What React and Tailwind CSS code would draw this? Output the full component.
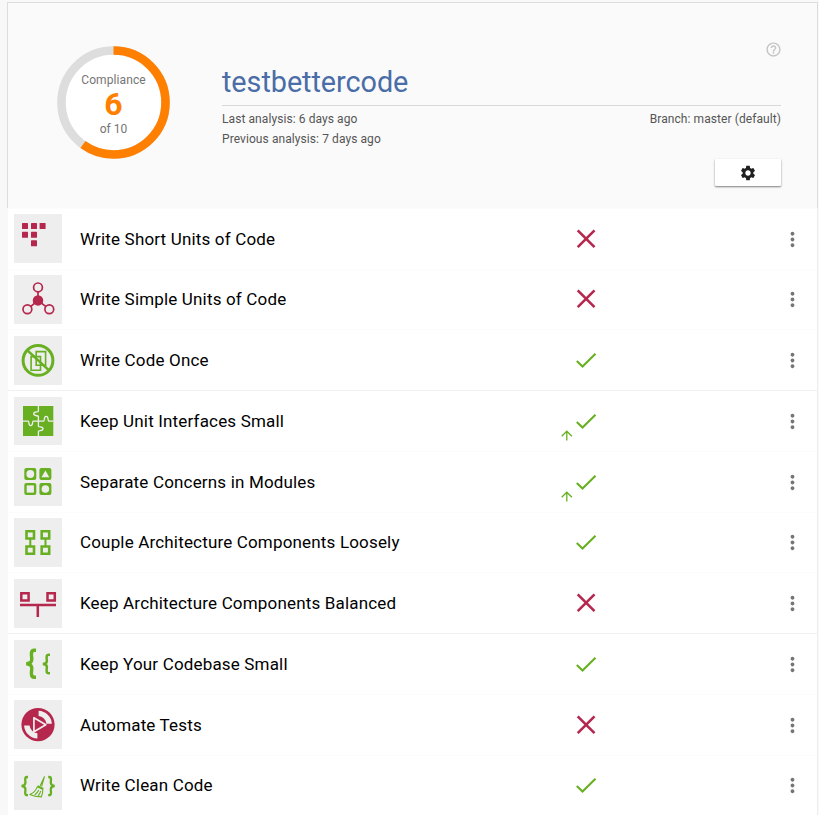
import React from "react";
import { MdSettings, MdHelpOutline, MdMoreVert } from "react-icons/md";

const RED = "#b5274d";
const GREEN = "#68b022";
const TILE = "#eeeeee";

function ShortUnits() {
  return (
    <g fill={RED}>
      {[[8, 9], [17, 9], [25.6, 9], [8, 17.8], [17, 17.8], [17, 26.3]].map(([x, y]) => (
        <rect key={`${x}-${y}`} x={x} y={y} width="6" height="6" rx="0.6" />
      ))}
    </g>
  );
}

function SimpleUnits() {
  return (
    <g fill="none" stroke={RED} strokeWidth="1.7">
      <path d="M24 16.5v9M24 25.5l-7.5 6.2M24 25.5l8 6.2" />
      <circle cx="24" cy="12.4" r="4.4" />
      <circle cx="13.4" cy="34.3" r="4.4" />
      <circle cx="35.3" cy="34.3" r="4.4" />
      <circle cx="24" cy="25.4" r="4.4" fill={RED} />
    </g>
  );
}

function CodeOnce() {
  return (
    <g fill="none" stroke={GREEN}>
      <path strokeWidth="1.6" d="M22.2 15.6h9.4v13.6h-9.4zM17.1 20.6h9.4v13.6h-9.4z" />
      <circle cx="24" cy="24.4" r="14.9" strokeWidth="3" />
      <path strokeWidth="2.6" d="M13.4 14.4L35 34.4" />
    </g>
  );
}

function SmallInterfaces() {
  return (
    <g>
      <path fill={GREEN} d="M9 9h30.3v30H9z" />
      <path
        fill="none"
        stroke={TILE}
        strokeWidth="1.3"
        d="M24.4 9v5.2c-.6 1.2-4.7-.1-4.7 2.6s4.1 1.4 4.7 2.6v4.4M24.4 23.8v5.4c.6 1.2 4.6.1 4.6 2.6s-4 1.4-4.6 2.6V39M9 24.2h5.2c1.3.5-.1 4.5 2.5 4.5s1.3-4 2.5-4.5h10.4c1.3-.5-.1-4.8 2.6-4.8s1.3 4.3 2.6 4.8h4.5"
      />
    </g>
  );
}

function SeparateConcerns() {
  return (
    <g>
      <g fill={GREEN}>
        <rect x="10.3" y="11" width="12" height="12" rx="2" />
        <rect x="25.4" y="11" width="12" height="12" rx="2" />
        <rect x="10.3" y="26" width="12" height="12" rx="2" />
        <rect x="25.4" y="26" width="12" height="12" rx="2" />
      </g>
      <g fill={TILE}>
        <circle cx="16.3" cy="17" r="3.9" />
        <path d="M31.4 13.4l3.9 6.8h-7.8z" />
        <rect x="12.7" y="28.4" width="7.2" height="7.2" />
        <circle cx="31.4" cy="32" r="3.8" />
      </g>
    </g>
  );
}

function CoupleLoosely() {
  return (
    <g fill="none" stroke={GREEN} strokeWidth="2.6">
      <path d="M12.5 13.3h7.5v7.2h-7.5zM12.5 28.5h7.5v7.2h-7.5zM27.7 13.3h7.5v7.2h-7.5zM27.7 28.5h7.5v7.2h-7.5z" />
      <path strokeWidth="2" d="M16.3 21v7M31.5 21v7" />
    </g>
  );
}

function Balanced() {
  return (
    <g fill="none" stroke={RED} strokeWidth="2.5">
      <path d="M7.3 14.2h7.3v7.3H7.3zM33.5 14.2h7.3v7.3h-7.3z" />
      <path d="M6 26.1h36M23.8 26v12" />
    </g>
  );
}

function SmallCodebase() {
  return (
    <g fill="none" stroke={GREEN}>
      <path strokeWidth="3.4" d="M22 10.3h-1.6c-2.4 0-3 1.4-3 3.4 0 2.7.5 4.2.3 6.3-.2 2.3-2.1 3.6-5.5 3.7 3.4.2 5.3 1.5 5.5 3.8.2 2.1-.3 3.7-.3 6.3 0 2 .7 3.5 3 3.5H22" />
      <path strokeWidth="2.5" d="M36 14.8h-1.2c-1.7 0-2.2 1-2.2 2.4 0 1.8.4 2.9.2 4.3-.2 1.6-1.6 2.4-4 2.5 2.4.1 3.8.9 4 2.5.2 1.4-.2 2.5-.2 4.3 0 1.5.5 2.5 2.2 2.5H36" />
    </g>
  );
}

function AutomateTests() {
  return (
    <g>
      <circle cx="24" cy="24.6" r="16.6" fill={RED} />
      <path fill={TILE} d="M24.6 10.7a14 14 0 0 1 13.3 13.1h-5.5a8.5 8.5 0 0 0-7.8-7.7zM23.4 38.6A14 14 0 0 1 10.1 25.4h5.5a8.5 8.5 0 0 0 7.8 7.8z" />
      <path fill={RED} stroke={TILE} strokeWidth="1.7" strokeLinejoin="round" d="M19.9 17.8v14L31.8 24.7z" />
    </g>
  );
}

function CleanCode() {
  return (
    <g fill="none" stroke={GREEN}>
      <path strokeWidth="2.3" d="M14 16h-.8c-1.6 0-2 1-2 2.2 0 1.4.3 2.3.2 3.6-.1 1.9-1.5 3-3.9 3.2 2.4.1 3.8 1.1 3.9 3.1.1 1.4-.2 2.3-.2 3.6 0 1.5.5 2.5 2 2.5h.8M34.2 16h.8c1.6 0 2 1 2 2.2 0 1.4-.3 2.3-.2 3.6.1 1.9 1.5 3 3.9 3.2-2.4.1-3.8 1.1-3.9 3.1-.1 1.4.2 2.3.2 3.6 0 1.5-.5 2.5-2 2.5h-.8" />
      <path strokeWidth="1.1" strokeLinejoin="round" d="M30.5 15.4l-4.4 9.6M30.5 15.4l-2.9 10.2M23.4 25.6c-1.6 4.5-4 6.5-7.5 7.9 3 1.6 7.3 2.4 11.4 2.4 1.2-2.6 1.6-4.6 1.5-7.6M24.8 29c-.8 1.9-2.3 3.6-4.1 5M26.8 29.8c-.6 2-1.5 3.6-2.7 5" />
      <path strokeWidth="2.2" d="M23.4 25.2l5.8 2.8" />
    </g>
  );
}

const GUIDELINES = [
  { label: "Write Short Units of Code", Icon: ShortUnits, pass: false },
  { label: "Write Simple Units of Code", Icon: SimpleUnits, pass: false },
  { label: "Write Code Once", Icon: CodeOnce, pass: true },
  { label: "Keep Unit Interfaces Small", Icon: SmallInterfaces, pass: true, improved: true, divided: true },
  { label: "Separate Concerns in Modules", Icon: SeparateConcerns, pass: true, improved: true },
  { label: "Couple Architecture Components Loosely", Icon: CoupleLoosely, pass: true },
  { label: "Keep Architecture Components Balanced", Icon: Balanced, pass: false },
  { label: "Keep Your Codebase Small", Icon: SmallCodebase, pass: true, divided: true },
  { label: "Automate Tests", Icon: AutomateTests, pass: false },
  { label: "Write Clean Code", Icon: CleanCode, pass: true },
];

function Status({ pass, improved }) {
  return (
    <svg className="h-[34px] w-9 shrink-0 overflow-visible" viewBox="0 0 36 34" fill="none">
      {pass ? (
        <path d="M16.8 18l5.7 5.5L35.5 10.8" stroke={GREEN} strokeWidth="2.1" />
      ) : (
        <path d="M17.7 8.3l16.8 16.8M34.5 8.3L17.7 25.1" stroke={RED} strokeWidth="2.6" />
      )}
      {improved && <path d="M6.8 36.5v-9.2M1.7 32.3l5.1-5.1 5.1 5.1" stroke={GREEN} strokeWidth="1.3" />}
    </svg>
  );
}

function Row({ label, Icon, pass, improved, divided }) {
  return (
    <li className={`flex h-[60.75px] items-center border-t pr-[13px] pl-1.5 ${divided ? "border-[#f0f0f0]" : "border-[#fcfcfc]"}`}>
      <div className="h-[48.75px] w-12 shrink-0 bg-[#eeeeee]">
        <svg className="block h-12 w-12" viewBox="0 0 48 48">
          <Icon />
        </svg>
      </div>
      <span className="ml-[18px] w-[480px] text-[17px] leading-6 tracking-[0.01em] text-black">{label}</span>
      <Status pass={pass} improved={improved} />
      <MdMoreVert className="mt-px ml-auto h-[23px] w-[23px] text-[#757575]" />
    </li>
  );
}

function Gauge() {
  return (
    <div className="relative h-[114px] w-[114px] shrink-0">
      <svg className="block h-full w-full" viewBox="0 0 114 114">
        <circle cx="57.5" cy="56.5" r="52" fill="#ffffff" stroke="#dddddd" strokeWidth="8.6" />
        <circle
          cx="57.5"
          cy="56.5"
          r="52"
          fill="none"
          stroke="#ff8000"
          strokeWidth="8.6"
          pathLength="10"
          strokeDasharray="6 4"
          transform="rotate(-90 57.5 56.5)"
        />
      </svg>
      <div className="absolute inset-0 flex flex-col items-center pt-[26px] pl-px text-xs leading-4 text-[#757575]">
        <span className="tracking-[0.1px]">Compliance</span>
        <span className="text-[32px] leading-[33px] font-bold text-[#ff8000]">6</span>
        <span>of 10</span>
      </div>
    </div>
  );
}

export default function App() {
  return (
    <main className="h-[815px] overflow-hidden bg-[#f8f8f8] pt-0.5 pr-px pl-[7px] font-[Roboto,sans-serif]">
      <header className="flex h-[205.8px] border border-b-0 border-[#dddddd] bg-[#fafafa] pt-[43px] pr-9 pl-12">
        <Gauge />
        <section className="ml-[52px] flex-1">
          <div className="flex h-[60px] items-start justify-between border-b border-[#d8d8d8]">
            <h1 className="mt-4 text-[28.8px] leading-10 font-normal tracking-[-0.05px] text-[#4a6da7]">testbettercode</h1>
            <MdHelpOutline className="-mt-[5px] -mr-px h-[17px] w-[17px] text-[#c4c4c4]" />
          </div>
          <div className="flex justify-between pt-[3px] text-xs leading-5 tracking-[0.08px] text-[#555555]">
            <div>
              <p>Last analysis: 6 days ago</p>
              <p>Previous analysis: 7 days ago</p>
            </div>
            <p>Branch: master (default)</p>
          </div>
          <button className="mt-2.5 ml-auto flex h-[27px] w-[66px] items-center justify-center rounded-[1px] bg-white text-[#212121] shadow-[0_1px_2px_rgba(0,0,0,0.5)]">
            <MdSettings className="h-[18px] w-[18px]" />
          </button>
        </section>
      </header>
      <ul className="ml-px border-r border-[#eeeeee] bg-white">
        {GUIDELINES.map((item) => (
          <Row key={item.label} {...item} />
        ))}
      </ul>
    </main>
  );
}
